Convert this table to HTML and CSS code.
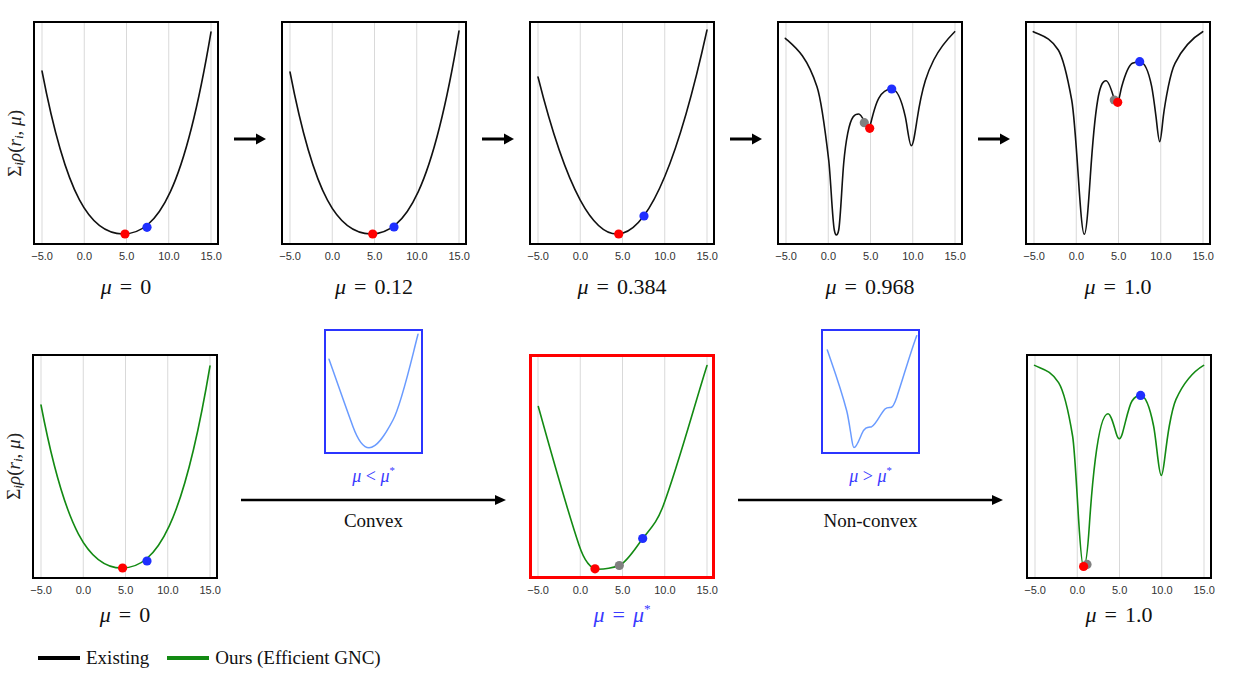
FILE: index.html
```html
<!DOCTYPE html>
<html>
<head>
<meta charset="utf-8">
<link rel="stylesheet" href="styles.css">
</head>
<body>
<div class="figure">
  <div class="row row-top">
    <div class="ylabel-col"><span class="ylabel">Σ<sub><i>i</i></sub><i>ρ</i>(<i>r</i><sub><i>i</i></sub>, <i>μ</i>)</span></div>

    <div class="panel">
      <div class="plot">
        <svg viewBox="0 0 182 220">
          <g class="grid"><line x1="7" y1="0" x2="7" y2="220"/><line x1="49.25" y1="0" x2="49.25" y2="220"/><line x1="91.5" y1="0" x2="91.5" y2="220"/><line x1="133.75" y1="0" x2="133.75" y2="220"/><line x1="176" y1="0" x2="176" y2="220"/></g>
          <path class="curve" d="M7,48 C31.3,174.6 55.6,211 88,211 C123.2,211 149.6,166 176,9"/>
          <circle class="dot-red" cx="90" cy="211" r="4.6"/>
          <circle class="dot-blue" cx="112" cy="204.3" r="4.6"/>
        </svg>
      </div>
      <div class="ticks"><span>−5.0</span><span>0.0</span><span>5.0</span><span>10.0</span><span>15.0</span></div>
      <div class="caption"><i>μ</i><span class="eq">=</span>0</div>
    </div>

    <div class="arrow-slot"><svg class="short-arrow" width="32" height="14" viewBox="0 0 32 14"><line x1="0" y1="7" x2="24" y2="7"/><polygon points="22,1.5 32,7 22,12.5"/></svg></div>

    <div class="panel">
      <div class="plot">
        <svg viewBox="0 0 182 220">
          <g class="grid"><line x1="7" y1="0" x2="7" y2="220"/><line x1="49.25" y1="0" x2="49.25" y2="220"/><line x1="91.5" y1="0" x2="91.5" y2="220"/><line x1="133.75" y1="0" x2="133.75" y2="220"/><line x1="176" y1="0" x2="176" y2="220"/></g>
          <path class="curve" d="M7,49 C31.3,174.9 55.6,211 88,211 C123.2,211 149.6,165.7 176,8"/>
          <circle class="dot-red" cx="89.7" cy="211" r="4.6"/>
          <circle class="dot-blue" cx="111" cy="204" r="4.6"/>
        </svg>
      </div>
      <div class="ticks"><span>−5.0</span><span>0.0</span><span>5.0</span><span>10.0</span><span>15.0</span></div>
      <div class="caption"><i>μ</i><span class="eq">=</span>0.12</div>
    </div>

    <div class="arrow-slot"><svg class="short-arrow" width="32" height="14" viewBox="0 0 32 14"><line x1="0" y1="7" x2="24" y2="7"/><polygon points="22,1.5 32,7 22,12.5"/></svg></div>

    <div class="panel">
      <div class="plot">
        <svg viewBox="0 0 182 220">
          <g class="grid"><line x1="7" y1="0" x2="7" y2="220"/><line x1="49.25" y1="0" x2="49.25" y2="220"/><line x1="91.5" y1="0" x2="91.5" y2="220"/><line x1="133.75" y1="0" x2="133.75" y2="220"/><line x1="176" y1="0" x2="176" y2="220"/></g>
          <path class="curve" d="M7,54 Q91.5,390 176,7"/>
          <circle class="dot-red" cx="87.7" cy="211" r="4.6"/>
          <circle class="dot-blue" cx="113" cy="193" r="4.6"/>
        </svg>
      </div>
      <div class="ticks"><span>−5.0</span><span>0.0</span><span>5.0</span><span>10.0</span><span>15.0</span></div>
      <div class="caption"><i>μ</i><span class="eq">=</span>0.384</div>
    </div>

    <div class="arrow-slot"><svg class="short-arrow" width="32" height="14" viewBox="0 0 32 14"><line x1="0" y1="7" x2="24" y2="7"/><polygon points="22,1.5 32,7 22,12.5"/></svg></div>

    <div class="panel">
      <div class="plot">
        <svg viewBox="0 0 182 220">
          <g class="grid"><line x1="7" y1="0" x2="7" y2="220"/><line x1="49.25" y1="0" x2="49.25" y2="220"/><line x1="91.5" y1="0" x2="91.5" y2="220"/><line x1="133.75" y1="0" x2="133.75" y2="220"/><line x1="176" y1="0" x2="176" y2="220"/></g>
          <path class="curve" d="M6.3,15.3 C16.87,24.8 27.43,32 38,63.7 C41.9,75.4 45.8,103.9 49.7,137 C51.57,152.9 53.43,197.7 55.3,207 C55.97,210.3 56.63,212 57.3,212 C58.1,212 58.9,211 59.7,207 C61.37,198.7 63.03,158.6 64.7,140.3 C66.03,125.6 67.37,117 68.7,110.3 C72.37,92 76.03,91 79.7,91 C83.3,91 87.5,105.5 90.5,105.5 C92,99 96.6,80.8 99.7,75.3 C104.03,67.5 108.37,66 112.7,66 C117.2,66 121.8,73.3 126.3,93.7 C128.3,102.7 130.3,122.7 132.3,122.7 C134.2,122.7 136.1,109.35 138,97 C143.57,60.8 149.13,48.1 154.7,37 C161.7,23 168.7,15.7 175.7,8.7"/>
          <circle class="dot-gray" cx="85.3" cy="99.7" r="4.6"/>
          <circle class="dot-red" cx="90.7" cy="105.3" r="4.6"/>
          <circle class="dot-blue" cx="112.7" cy="66" r="4.6"/>
        </svg>
      </div>
      <div class="ticks"><span>−5.0</span><span>0.0</span><span>5.0</span><span>10.0</span><span>15.0</span></div>
      <div class="caption"><i>μ</i><span class="eq">=</span>0.968</div>
    </div>

    <div class="arrow-slot"><svg class="short-arrow" width="32" height="14" viewBox="0 0 32 14"><line x1="0" y1="7" x2="24" y2="7"/><polygon points="22,1.5 32,7 22,12.5"/></svg></div>

    <div class="panel">
      <div class="plot">
        <svg viewBox="0 0 182 220">
          <g class="grid"><line x1="7" y1="0" x2="7" y2="220"/><line x1="49.25" y1="0" x2="49.25" y2="220"/><line x1="91.5" y1="0" x2="91.5" y2="220"/><line x1="133.75" y1="0" x2="133.75" y2="220"/><line x1="176" y1="0" x2="176" y2="220"/></g>
          <path class="curve" d="M6.3,8.7 C14.63,12.9 22.97,13.7 31.3,27 C35.77,34.1 40.23,52.4 44.7,77 C46.9,89.1 49.1,120.7 51.3,153.7 C53.3,183.7 55.3,211.3 57.3,211.3 C59.3,211.3 61.3,183.7 63.3,153.7 C65.77,116.7 68.23,91.8 70.7,77 C73.47,60.4 76.23,57.7 79,57.7 C81.67,57.7 84.33,66.2 87,75.5 C88.17,79.6 89.33,79.5 90.5,79.5 C91.9,79.5 93.3,68.6 94.7,63.7 C98.23,51.3 101.77,42.1 105.3,40.3 C107.77,39.1 110.23,38.7 112.7,38.7 C116.7,38.7 120.7,43.7 124.7,63.7 C126.13,70.9 127.57,82.2 129,93.7 C130.23,103.6 131.47,118.7 132.7,118.7 C133.93,118.7 135.07,103.6 136.3,93.7 C137.97,80.3 139.63,72.05 141.3,63.7 C143.53,52.5 145.77,44.8 148,40.3 C157.23,21.8 166.47,14.2 175.7,8.7"/>
          <circle class="dot-gray" cx="87.3" cy="77" r="4.6"/>
          <circle class="dot-red" cx="90.7" cy="79.3" r="4.6"/>
          <circle class="dot-blue" cx="112.7" cy="38.7" r="4.6"/>
        </svg>
      </div>
      <div class="ticks"><span>−5.0</span><span>0.0</span><span>5.0</span><span>10.0</span><span>15.0</span></div>
      <div class="caption"><i>μ</i><span class="eq">=</span>1.0</div>
    </div>
  </div>

  <div class="row row-bottom">
    <div class="ylabel-col"><span class="ylabel">Σ<sub><i>i</i></sub><i>ρ</i>(<i>r</i><sub><i>i</i></sub>, <i>μ</i>)</span></div>

    <div class="panel">
      <div class="plot">
        <svg viewBox="0 0 182 221">
          <g class="grid"><line x1="7" y1="0" x2="7" y2="221"/><line x1="49.25" y1="0" x2="49.25" y2="221"/><line x1="91.5" y1="0" x2="91.5" y2="221"/><line x1="133.75" y1="0" x2="133.75" y2="221"/><line x1="176" y1="0" x2="176" y2="221"/></g>
          <path class="curve curve-green" d="M7,49 C31.3,175.7 55.6,212 88,212 C123.2,212 149.6,167 176,10"/>
          <circle class="dot-red" cx="88.6" cy="212" r="4.6"/>
          <circle class="dot-blue" cx="113" cy="205" r="4.6"/>
        </svg>
      </div>
      <div class="ticks"><span>−5.0</span><span>0.0</span><span>5.0</span><span>10.0</span><span>15.0</span></div>
      <div class="caption"><i>μ</i><span class="eq">=</span>0</div>
    </div>

    <div class="transition">
      <div class="inset">
        <svg viewBox="0 0 95 121">
          <path class="inset-curve" d="M3,28.3 C11,50.7 19,74.1 27,95.7 C32.33,110.1 37.67,116.7 43,116.7 C51,116.7 59,104.2 67,89 C75.33,73.2 83.67,35.8 92,3.3"/>
        </svg>
      </div>
      <div class="inset-label"><i>μ</i> &lt; <i>μ</i><sup>*</sup></div>
      <svg class="long-arrow" width="265" height="12" viewBox="0 0 265 12"><line x1="0" y1="6" x2="256" y2="6"/><polygon points="254,1 265,6 254,11"/></svg>
      <div class="trans-label">Convex</div>
    </div>

    <div class="panel">
      <div class="plot plot-red">
        <svg viewBox="0 0 180 219">
          <g class="grid"><line x1="6" y1="0" x2="6" y2="219"/><line x1="48.25" y1="0" x2="48.25" y2="219"/><line x1="90.5" y1="0" x2="90.5" y2="219"/><line x1="132.75" y1="0" x2="132.75" y2="219"/><line x1="175" y1="0" x2="175" y2="219"/></g>
          <path class="curve curve-green" d="M6.3,49.5 C19.87,98.3 33.43,147.3 47,188 C53.33,207 59.67,212.2 66,212.2 C73.1,212.2 80.2,211 87.3,208.5 C95.1,205 102.9,192 110.7,181.5 C117.57,172.2 124.43,167 131.3,148.5 C145.87,109.2 160.43,55.1 175,8.5"/>
          <circle class="dot-red" cx="63" cy="211.8" r="4.6"/>
          <circle class="dot-gray" cx="87.3" cy="208.5" r="4.6"/>
          <circle class="dot-blue" cx="110.7" cy="181.5" r="4.6"/>
        </svg>
      </div>
      <div class="ticks"><span>−5.0</span><span>0.0</span><span>5.0</span><span>10.0</span><span>15.0</span></div>
      <div class="caption caption-blue"><i>μ</i><span class="eq">=</span><i>μ</i><sup>*</sup></div>
    </div>

    <div class="transition">
      <div class="inset">
        <svg viewBox="0 0 95 121">
          <path class="inset-curve" d="M4.3,19 C10.77,37.8 17.23,55.1 23.7,79.7 C25.47,86.4 27.23,99.4 29,110 C29.67,114 30.33,116.6 31,116.6 C33.57,116.6 36.13,108.9 38.7,103 C42.03,95.3 45.37,96.4 48.7,95.7 C53.13,93.5 57.57,82.4 62,78 C63.83,76.35 65.67,76.6 67.5,76.6 C69.57,76.6 71.63,72.6 73.7,66.4 C80.37,46.4 87.03,22.7 93.7,4.7"/>
        </svg>
      </div>
      <div class="inset-label"><i>μ</i> &gt; <i>μ</i><sup>*</sup></div>
      <svg class="long-arrow" width="265" height="12" viewBox="0 0 265 12"><line x1="0" y1="6" x2="256" y2="6"/><polygon points="254,1 265,6 254,11"/></svg>
      <div class="trans-label">Non-convex</div>
    </div>

    <div class="panel">
      <div class="plot">
        <svg viewBox="0 0 182 221">
          <g class="grid"><line x1="7" y1="0" x2="7" y2="221"/><line x1="49.25" y1="0" x2="49.25" y2="221"/><line x1="91.5" y1="0" x2="91.5" y2="221"/><line x1="133.75" y1="0" x2="133.75" y2="221"/><line x1="176" y1="0" x2="176" y2="221"/></g>
          <path class="curve curve-green" d="M6.6,9.4 C14.6,13.4 22.6,13.9 30.6,26.7 C35.27,34.2 39.93,52 44.6,80 C46.6,92 48.6,131.4 50.6,163.4 C52.27,190.1 53.93,211 55.6,211 C57.5,211 59.4,198.5 61.3,170 C63.3,140 65.3,119.4 67.3,103.4 C71.53,69.6 75.77,57.7 80,57.7 C82.67,57.7 85.33,67.4 88,76.7 C89.1,80.55 90.2,82.7 91.3,82.7 C92.4,82.7 93.5,80.55 94.6,76.7 C97.73,65.7 100.87,49.7 104,45 C106.87,40.7 109.73,39.4 112.6,39.4 C116.93,39.4 121.27,48.35 125.6,70 C127.07,77.3 128.53,91.6 130,103.4 C131.1,112.2 132.2,119.4 133.3,119.4 C134.4,119.4 135.5,112.2 136.6,103.4 C138.17,90.8 139.73,78.6 141.3,70 C143.53,57.7 145.77,48.3 148,43.4 C157.2,23.2 166.4,14.9 175.6,9.4"/>
          <circle class="dot-gray" cx="59" cy="208.4" r="4.6"/>
          <circle class="dot-red" cx="55.6" cy="210.5" r="4.6"/>
          <circle class="dot-blue" cx="112.6" cy="39.4" r="4.6"/>
        </svg>
      </div>
      <div class="ticks"><span>−5.0</span><span>0.0</span><span>5.0</span><span>10.0</span><span>15.0</span></div>
      <div class="caption"><i>μ</i><span class="eq">=</span>1.0</div>
    </div>
  </div>

  <div class="legend">
    <div class="legend-item"><span class="swatch swatch-black"></span>Existing</div>
    <div class="legend-item"><span class="swatch swatch-green"></span>Ours (Efficient GNC)</div>
  </div>
</div>
</body>
</html>
```

FILE: styles.css
```css
* { box-sizing: border-box; }

body {
  margin: 0;
  background: #ffffff;
  font-family: "Liberation Serif", serif;
  color: #111111;
}

.figure {
  width: 1237px;
  height: 681px;
  display: flex;
  flex-direction: column;
  overflow: hidden;
}

.row {
  display: flex;
  align-items: flex-start;
}

.row-top {
  padding-top: 21px;
  height: 299px;
}

.row-bottom {
  margin-top: 30px;
}

.ylabel-col {
  width: 33px;
  height: 224px;
  padding-top: 20px;
  display: flex;
  align-items: center;
  justify-content: center;
}

.row-bottom .ylabel-col {
  width: 32px;
  height: 225px;
  margin-top: 25px;
  padding-top: 0;
}

.ylabel {
  writing-mode: vertical-rl;
  transform: rotate(180deg);
  font-size: 19px;
  line-height: 22px;
  white-space: nowrap;
  color: #222;
}

.ylabel sub {
  font-size: 0.7em;
  vertical-align: -0.3em;
}

.panel {
  width: 186px;
  display: flex;
  flex-direction: column;
  align-items: center;
}

.row-bottom .panel {
  padding-top: 25px;
}

.plot {
  width: 186px;
  height: 224px;
  border: 2px solid #000;
  background: #fff;
}

.row-bottom .plot {
  height: 225px;
}

.plot-red {
  border: 3px solid #ff0000;
}

.plot svg,
.inset svg {
  display: block;
  width: 100%;
  height: 100%;
}

.grid line {
  stroke: #d9d9d9;
  stroke-width: 1;
}

.curve {
  fill: none;
  stroke: #111111;
  stroke-width: 1.6;
  stroke-linejoin: round;
  stroke-linecap: round;
}

.curve-green {
  stroke: #138a13;
}

.dot-red { fill: #ff0000; }
.dot-blue { fill: #1f2fff; }
.dot-gray { fill: #808080; }

.ticks {
  align-self: flex-start;
  margin-left: -12px;
  margin-top: 4px;
  display: grid;
  grid-template-columns: repeat(5, 42.25px);
  font-family: "Liberation Sans", sans-serif;
  font-size: 11px;
  line-height: 14px;
  color: #333;
  text-align: center;
}

.caption {
  margin-top: 12px;
  font-size: 22px;
  line-height: 24px;
  white-space: nowrap;
  color: #111;
}

.row-bottom .caption {
  margin-top: 6px;
}

.caption-blue {
  color: #3a3aff;
}

.caption sup,
.inset-label sup {
  font-size: 0.6em;
  vertical-align: 0.7em;
  line-height: 0;
}

.eq {
  margin: 0 8px;
}

.arrow-slot {
  width: 62px;
  margin-top: 111px;
  display: flex;
  justify-content: center;
}

.short-arrow line,
.long-arrow line {
  stroke: #000;
  stroke-width: 3;
}

.long-arrow line {
  stroke-width: 2.5;
}

.short-arrow polygon,
.long-arrow polygon {
  fill: #000;
}

.transition {
  width: 311px;
  display: flex;
  flex-direction: column;
  align-items: center;
}

.inset {
  width: 99px;
  height: 125px;
  border: 2px solid #2b35ff;
}

.inset-curve {
  fill: none;
  stroke: #6a9bff;
  stroke-width: 1.5;
  stroke-linejoin: round;
  stroke-linecap: round;
}

.inset-label {
  margin-top: 12px;
  font-size: 18px;
  line-height: 20px;
  color: #3a3aff;
  white-space: nowrap;
}

.long-arrow {
  display: block;
  margin-top: 8px;
}

.trans-label {
  margin-top: 4px;
  font-size: 19px;
  line-height: 22px;
  color: #111;
}

.legend {
  display: flex;
  align-items: center;
  margin-top: 19px;
  margin-left: 38px;
  font-size: 19px;
  line-height: 24px;
  color: #111;
}

.legend-item {
  display: flex;
  align-items: center;
}

.legend-item + .legend-item {
  margin-left: 18px;
}

.swatch {
  display: inline-block;
  width: 42px;
  height: 4px;
  margin-right: 6px;
}

.swatch-black { background: #000; }
.swatch-green { background: #138a13; }
```
